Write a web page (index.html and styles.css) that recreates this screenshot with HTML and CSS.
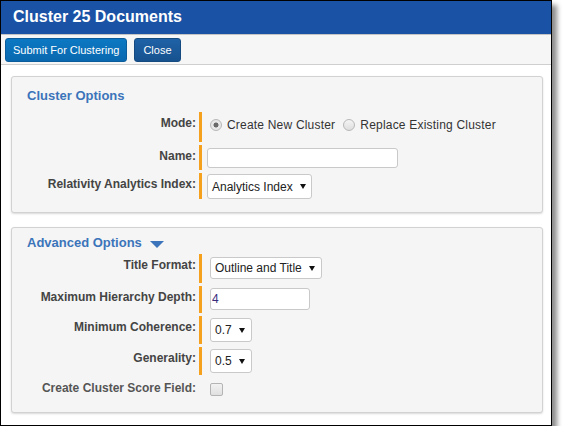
FILE: index.html
```html
<!DOCTYPE html>
<html lang="en">
<head>
  <meta charset="UTF-8" />
  <meta name="viewport" content="width=device-width, initial-scale=1.0"/>
  <title>Cluster 25 Documents</title>
  <link rel="stylesheet" href="styles.css">
</head>
<body>

<div class="window">
  <header class="titlebar">
    <h1>Cluster 25 Documents</h1>
  </header>

  <div class="toolbar">
    <button class="btn btn-primary">Submit For Clustering</button>
    <button class="btn btn-close">Close</button>
  </div>

  <div class="content">
    <section class="panel">
      <h2 class="panel-title">Cluster Options</h2>

      <div class="field">
        <label class="field-label">Mode:</label>
        <div class="field-value field-radios">
          <label class="option"><input type="radio" name="mode" class="radio" checked/> Create New Cluster</label>
          <label class="option"><input type="radio" name="mode" class="radio"/> Replace Existing Cluster</label>
        </div>
      </div>

      <div class="field">
        <label class="field-label">Name:</label>
        <div class="field-value">
          <input type="text" class="text-input name-input"/>
        </div>
      </div>

      <div class="field">
        <label class="field-label">Relativity Analytics Index:</label>
        <div class="field-value">
          <div class="select select-index">Analytics Index</div>
        </div>
      </div>
    </section>

    <section class="panel panel-advanced">
      <h2 class="panel-title">Advanced Options <span class="caret-down"></span></h2>

      <div class="field">
        <label class="field-label">Title Format:</label>
        <div class="field-value">
          <div class="select select-title">Outline and Title</div>
        </div>
      </div>

      <div class="field">
        <label class="field-label">Maximum Hierarchy Depth:</label>
        <div class="field-value">
          <input type="text" class="text-input depth-input" value="4"/>
        </div>
      </div>

      <div class="field">
        <label class="field-label">Minimum Coherence:</label>
        <div class="field-value">
          <div class="select select-small">0.7</div>
        </div>
      </div>

      <div class="field">
        <label class="field-label">Generality:</label>
        <div class="field-value">
          <div class="select select-small">0.5</div>
        </div>
      </div>

      <div class="field field-plain">
        <label class="field-label">Create Cluster Score Field:</label>
        <div class="field-value">
          <input type="checkbox" class="checkbox"/>
        </div>
      </div>
    </section>
  </div>
</div>

</body>
</html>
```

FILE: styles.css
```css
body {
  font-family: "Liberation Sans", Arial, sans-serif;
  background-color: #fff;
  color: #333;
  margin: 0;
  padding: 0;
}
.window {
  box-sizing: border-box;
  width: 552px;
  height: 426px;
  border: 1px solid #000;
  background: #fff;
  box-shadow: 5px 5px 5px rgba(0, 0, 0, 0.45);
}
.titlebar {
  background-color: #1a53a6;
  padding: 7px 12px 8px;
  border-bottom: 1px solid #c4c4c4;
}
.titlebar h1 {
  margin: 0;
  font-size: 16px;
  line-height: 18px;
  font-weight: bold;
  color: #fff;
}
.toolbar {
  display: flex;
  gap: 7px;
  background-color: #f6f6f6;
  padding: 3px 0 2px 4px;
  border-bottom: 1px solid #cfcfcf;
}
.btn {
  height: 24px;
  padding: 0 7px;
  font-family: inherit;
  font-size: 11px;
  line-height: 22px;
  color: #fff;
  border-radius: 3px;
  cursor: pointer;
}
.btn-primary {
  background: linear-gradient(#0c78c3, #0968af);
  border: 1px solid #0a5c9a;
}
.btn-close {
  padding: 0 8px;
  background: linear-gradient(#1f62a6, #17528f);
  border: 1px solid #154a80;
}
.content {
  padding: 11px 8px 0 10px;
}
.panel {
  background-color: #f5f5f5;
  border: 1px solid #d2d2d2;
  border-radius: 3px;
  box-shadow: 0 1px 2px rgba(0, 0, 0, 0.15);
  padding: 11px 0 10px;
}
.panel-advanced {
  margin-top: 14px;
  padding: 7px 0 13px;
}
.panel-title {
  display: flex;
  align-items: center;
  margin: 0 0 9px;
  padding-left: 15px;
  font-size: 13px;
  line-height: 15px;
  font-weight: bold;
  color: #3b74ba;
}
.panel-advanced .panel-title {
  margin-bottom: 4px;
}
.caret-down {
  width: 0;
  height: 0;
  margin: 3px 0 0 8px;
  border-left: 7px solid transparent;
  border-right: 7px solid transparent;
  border-top: 7px solid #3b74ba;
}
.field {
  display: flex;
  margin-bottom: 3px;
}
.field-label {
  width: 184px;
  margin-right: 3px;
  padding-top: 4px;
  text-align: right;
  font-size: 12px;
  line-height: 14px;
  font-weight: bold;
  color: #444;
}
.field-value {
  display: flex;
  align-items: flex-start;
  border-left: 3px solid #f6a11d;
  padding-left: 5px;
}
.panel-advanced .field-value {
  padding-left: 8px;
}
.field-plain .field-label {
  padding-top: 3px;
  color: #555;
}
.field-plain .field-value {
  border-left-color: transparent;
}
.field-radios {
  padding: 6px 0 10px 5px;
}
.option {
  display: flex;
  align-items: center;
  margin-right: 5px;
  font-size: 12px;
  line-height: 14px;
  letter-spacing: 0.2px;
  color: #333;
}
.radio {
  appearance: none;
  box-sizing: border-box;
  width: 12px;
  height: 12px;
  margin: 0 5px 0 3px;
  border: 1px solid #b8b8b8;
  border-radius: 50%;
  background: linear-gradient(#f4f4f4, #dedede);
}
.radio:checked {
  background: radial-gradient(circle, #6a6a6a 0 2.2px, #e8e8e8 2.8px);
}
.text-input {
  box-sizing: border-box;
  border: 1px solid #c9c9c9;
  border-radius: 3px;
  background: #fff;
  font-family: inherit;
  font-size: 12px;
  padding: 0 2px;
  outline: none;
}
.name-input {
  width: 191px;
  height: 20px;
  margin: 3px 0 2px;
}
.depth-input {
  width: 100px;
  height: 22px;
  margin: 2px 0 3px;
  padding-left: 1px;
  color: #3a2c7c;
}
.select {
  box-sizing: border-box;
  display: flex;
  align-items: center;
  padding: 0 5px 0 4px;
  border: 1px solid #c9c9c9;
  border-radius: 3px;
  background: #fff;
  font-size: 12px;
  color: #222;
}
.select::after {
  content: "";
  width: 0;
  height: 0;
  margin-left: 7px;
  border-left: 3px solid transparent;
  border-right: 3px solid transparent;
  border-top: 5px solid #111;
}
.select-index {
  height: 25px;
  margin-top: 1px;
}
.select-title {
  height: 22px;
  margin: 3px 0 4px;
  padding-right: 6px;
}
.select-small {
  height: 24px;
  margin: 2px 0;
  padding-right: 6px;
}
.checkbox {
  appearance: none;
  box-sizing: border-box;
  width: 13px;
  height: 13px;
  margin: 5px 0 0;
  border: 1px solid #b4b4b4;
  border-radius: 2px;
  background: linear-gradient(#f2f2f2, #e0e0e0);
}
```
